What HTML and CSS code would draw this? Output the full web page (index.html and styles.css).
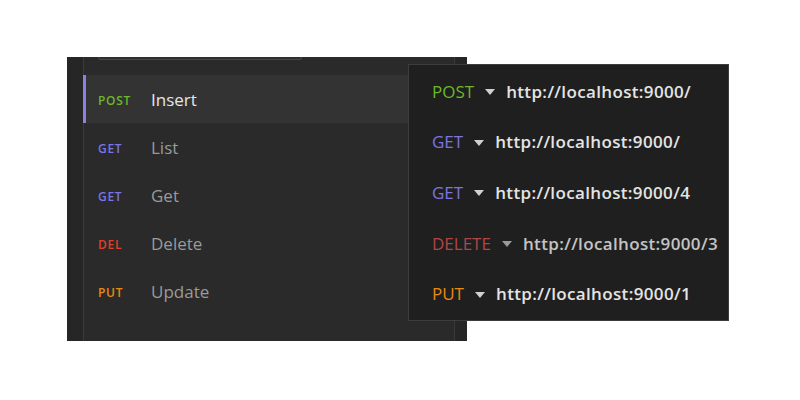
FILE: index.html
```html
<!DOCTYPE html>
<html>
<head>
<meta charset="utf-8">
<link rel="stylesheet" href="styles.css">
</head>
<body>
<div class="stage">
  <div class="app">
    <div class="strip-left"></div>
    <div class="sidebar">
      <div class="search-area"><div class="search-box"></div></div>
      <ul class="requests">
        <li class="req active"><span class="m post">POST</span><span class="name">Insert</span></li>
        <li class="req"><span class="m get">GET</span><span class="name">List</span></li>
        <li class="req"><span class="m get">GET</span><span class="name">Get</span></li>
        <li class="req"><span class="m del">DEL</span><span class="name">Delete</span></li>
        <li class="req"><span class="m put">PUT</span><span class="name">Update</span></li>
      </ul>
    </div>
    <div class="strip-right"></div>
  </div>
  <div class="popup">
    <div class="prow"><span class="pm post">POST</span><span class="caret"></span><span class="url">http://localhost:9000/</span></div>
    <div class="prow"><span class="pm get">GET</span><span class="caret"></span><span class="url">http://localhost:9000/</span></div>
    <div class="prow"><span class="pm get">GET</span><span class="caret"></span><span class="url">http://localhost:9000/4</span></div>
    <div class="prow dim"><span class="pm del">DELETE</span><span class="caret"></span><span class="url">http://localhost:9000/3</span></div>
    <div class="prow"><span class="pm put">PUT</span><span class="caret"></span><span class="url">http://localhost:9000/1</span></div>
  </div>
</div>
</body>
</html>
```

FILE: styles.css
```css
html, body {
  margin: 0;
  padding: 0;
  background: #ffffff;
}
body {
  font-family: "Open Sans", "Noto Sans", sans-serif;
}
.stage {
  position: relative;
  width: 800px;
  height: 400px;
  padding: 57px 0 0 67px;
  box-sizing: border-box;
}
.app {
  display: flex;
  width: 400px;
  height: 284px;
  background: #2a2a2a;
}
.strip-left {
  width: 16px;
  background: #262626;
  border-right: 1px solid #3a3a3a;
}
.sidebar {
  flex: 1;
  display: flex;
  flex-direction: column;
}
.strip-right {
  width: 12px;
  background: #262626;
  border-left: 1px solid #3a3a3a;
}
.search-area {
  height: 18px;
  padding: 0 0 0 14px;
}
.search-box {
  width: 202px;
  height: 2px;
  border: 1px solid #474747;
  border-top: none;
  border-radius: 0 0 4px 4px;
  background: #2f2f2f;
}
.requests {
  list-style: none;
  margin: 0;
  padding: 0;
}
.req {
  height: 48px;
  display: flex;
  align-items: center;
  padding-left: 14px;
}
.req.active {
  background: #333333;
  margin-left: -1px;
  border-left: 3px solid #8b80e8;
  padding-left: 12px;
}
.m {
  width: 53px;
  font-size: 12px;
  font-weight: 600;
  letter-spacing: 0.7px;
  padding-top: 2px;
}
.name {
  font-size: 17px;
  color: #9a9a9a;
}
.active .name {
  color: #e6e6e6;
}
.post { color: #6ab82a; }
.get { color: #7d74e0; }
.m.del { color: #e0402a; }
.put { color: #e88a10; }
.pm.del { color: #b04646; }

.popup {
  position: absolute;
  left: 408px;
  top: 64px;
  width: 321px;
  height: 257px;
  box-sizing: border-box;
  background: #1f1f1f;
  border: 1px solid #3d3d3d;
  padding: 1px 0 3px 23px;
}
.prow {
  height: 50.6px;
  display: flex;
  align-items: center;
  font-size: 17px;
}
.pm {
  font-weight: 400;
}
.caret {
  width: 0;
  height: 0;
  border-left: 5.5px solid transparent;
  border-right: 5.5px solid transparent;
  border-top: 6px solid #d0d0d0;
  margin: 2px 11px 0 11px;
}
.url {
  color: #e4e4e4;
  font-weight: 600;
  letter-spacing: 0.35px;
}
.dim .caret {
  border-top-color: #9a9a9a;
}
.dim .url {
  color: #c4c4c4;
}
```
